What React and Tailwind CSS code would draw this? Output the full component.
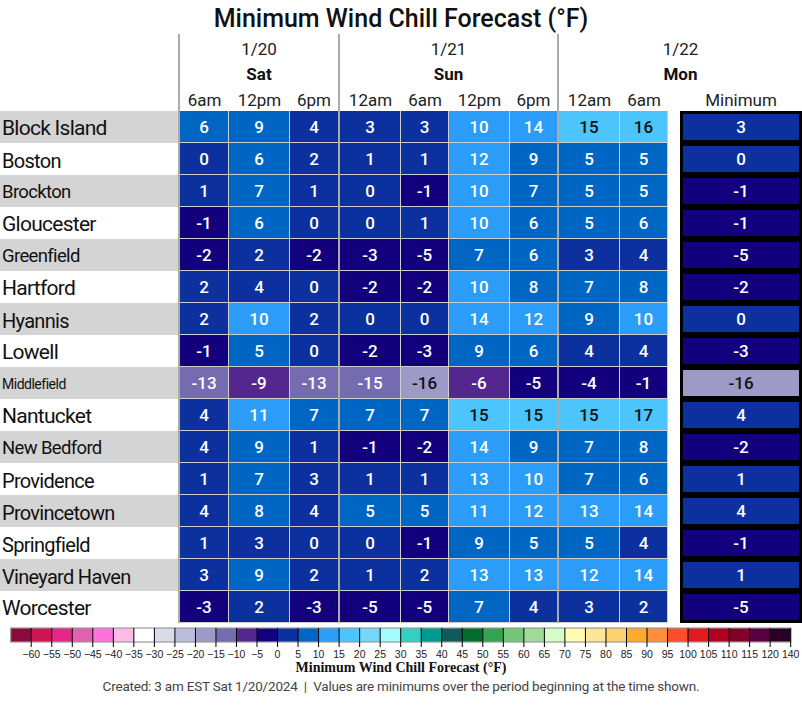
import React from 'react';

// Legend bins: <-60, then 5° steps from -60 up to 120, then 120–140
const BINS = [
  'bg-[#8b0a3e]', 'bg-[#cf1454]', 'bg-[#e4288a]', 'bg-[#de62ac]', 'bg-[#fe72dc]', 'bg-[#ffbbe6]',
  'bg-[#ffffff]', 'bg-[#dadaeb]', 'bg-[#bcbddc]', 'bg-[#9e9ac8]', 'bg-[#756bb1]', 'bg-[#54278f]',
  'bg-[#12007c]', 'bg-[#0c309e]', 'bg-[#0066c4]', 'bg-[#2b9cf8]', 'bg-[#4cc4fc]', 'bg-[#74d8fc]',
  'bg-[#a6fcfc]', 'bg-[#33cfc4]', 'bg-[#019a92]', 'bg-[#105a58]', 'bg-[#016c2c]', 'bg-[#32a452]',
  'bg-[#74c476]', 'bg-[#a1d99b]', 'bg-[#d2fdc4]', 'bg-[#fefcb0]', 'bg-[#fee698]', 'bg-[#fed070]',
  'bg-[#feaa2c]', 'bg-[#fd8c3c]', 'bg-[#fc4e2a]', 'bg-[#e31a1c]', 'bg-[#b10026]', 'bg-[#800026]',
  'bg-[#5a0040]', 'bg-[#2a0028]',
];
const DARK_TEXT = new Set([5, 6, 7, 8, 9, 16, 17, 18, 25, 26, 27, 28, 29, 30]);

function binOf(v) {
  if (v < -60) return 0;
  if (v >= 120) return 37;
  return Math.floor((v + 60) / 5) + 1;
}

const CITIES = [
  { name: 'Block Island', size: 'text-[21px]', v: [6, 9, 4, 3, 3, 10, 14, 15, 16], min: 3 },
  { name: 'Boston', size: 'text-[20px]', v: [0, 6, 2, 1, 1, 12, 9, 5, 5], min: 0 },
  { name: 'Brockton', size: 'text-[18.5px]', v: [1, 7, 1, 0, -1, 10, 7, 5, 5], min: -1 },
  { name: 'Gloucester', size: 'text-[21px]', v: [-1, 6, 0, 0, 1, 10, 6, 5, 6], min: -1 },
  { name: 'Greenfield', size: 'text-[18.5px]', v: [-2, 2, -2, -3, -5, 7, 6, 3, 4], min: -5 },
  { name: 'Hartford', size: 'text-[21px]', v: [2, 4, 0, -2, -2, 10, 8, 7, 8], min: -2 },
  { name: 'Hyannis', size: 'text-[20px]', v: [2, 10, 2, 0, 0, 14, 12, 9, 10], min: 0 },
  { name: 'Lowell', size: 'text-[21px]', v: [-1, 5, 0, -2, -3, 9, 6, 4, 4], min: -3 },
  { name: 'Middlefield', size: 'text-[14px]', v: [-13, -9, -13, -15, -16, -6, -5, -4, -1], min: -16 },
  { name: 'Nantucket', size: 'text-[21px]', v: [4, 11, 7, 7, 7, 15, 15, 15, 17], min: 4 },
  { name: 'New Bedford', size: 'text-[18.5px]', v: [4, 9, 1, -1, -2, 14, 9, 7, 8], min: -2 },
  { name: 'Providence', size: 'text-[20px]', v: [1, 7, 3, 1, 1, 13, 10, 7, 6], min: 1 },
  { name: 'Provincetown', size: 'text-[20px]', v: [4, 8, 4, 5, 5, 11, 12, 13, 14], min: 4 },
  { name: 'Springfield', size: 'text-[20px]', v: [1, 3, 0, 0, -1, 9, 5, 5, 4], min: -1 },
  { name: 'Vineyard Haven', size: 'text-[20px]', v: [3, 9, 2, 1, 2, 13, 13, 12, 14], min: 1 },
  { name: 'Worcester', size: 'text-[21px]', v: [-3, 2, -3, -5, -5, 7, 4, 3, 2], min: -5 },
];

// start = index into each city's values; w includes the cell's right border
const GROUPS = [
  {
    date: '1/20', day: 'Sat', width: 'w-[160px]',
    cols: [
      { t: '6am', w: 'w-[49px]', border: true },
      { t: '12pm', w: 'w-[61px]', border: true },
      { t: '6pm', w: 'w-[48px]', border: false },
    ],
    start: 0,
  },
  {
    date: '1/21', day: 'Sun', width: 'w-[219px]',
    cols: [
      { t: '12am', w: 'w-[61px]', border: true },
      { t: '6am', w: 'w-[48px]', border: true },
      { t: '12pm', w: 'w-[61px]', border: true },
      { t: '6pm', w: 'w-[47px]', border: false },
    ],
    start: 3,
  },
  {
    date: '1/22', day: 'Mon', width: 'w-[245px]',
    cols: [
      { t: '12am', w: 'w-[61px]', border: true },
      { t: '6am', w: 'w-[48px]', border: true },
    ],
    start: 7,
    minimum: true,
  },
];

function Cell({ value, w, border }) {
  const b = binOf(value);
  return (
    <div
      className={`${w} h-[32px] shrink-0 flex items-center justify-center pt-[2px] border-b border-[#cfcfcf] text-[17px] font-medium
        ${BINS[b]} ${DARK_TEXT.has(b) ? 'text-[#111]' : 'text-white'} ${border ? 'border-r' : ''}`}
    >
      {value}
    </div>
  );
}

function MinCell({ value }) {
  const b = binOf(value);
  return (
    <div
      className={`w-[122px] h-[32px] shrink-0 flex items-center justify-center pt-[1px] border-[3px] border-black text-[17px] font-medium
        ${BINS[b]} ${DARK_TEXT.has(b) ? 'text-[#111]' : 'text-white'}`}
    >
      {value}
    </div>
  );
}

function ColorBar() {
  const x0 = 10.7;
  const bw = 20.526;
  const labels = [];
  for (let i = 1; i <= 38; i++) {
    const val = i === 38 ? 140 : -65 + i * 5;
    labels.push({ x: x0 + i * bw, text: val < 0 ? `\u2212${-val}` : `${val}` });
  }
  return (
    <svg width="802" height="38" className="block">
      {BINS.map((cls, i) => (
        <rect key={i} x={x0 + i * bw} y="5" width={bw} height="14" fill={cls.slice(4, -1)} />
      ))}
      <rect x={x0} y="5" width={bw * 38} height="14" fill="none" stroke="#9a9a9a" strokeWidth="1.2" />
      {labels.map((l, i) => (
        <g key={i}>
          <line x1={l.x} x2={l.x} y1="5" y2="24" stroke="#000" strokeWidth="1" />
          <text
            x={l.x}
            y="35"
            textAnchor="middle"
            fontSize="10.5"
            fill="#222"
            fontFamily="'Liberation Sans', Arial, sans-serif"
          >
            {l.text}
          </text>
        </g>
      ))}
    </svg>
  );
}

export default function App() {
  return (
    <div className="w-[802px] h-[715px] overflow-hidden bg-white text-[#111] font-['Roboto',sans-serif]">
      {/* ── Title ─────────────────────────────────────────────── */}
      <div className="h-[34px] flex items-center justify-center pt-[3px] text-[25px] font-medium leading-none">
        Minimum Wind Chill Forecast (°F)
      </div>

      {/* ── Table ─────────────────────────────────────────────── */}
      <div className="flex">
        {/* city names */}
        <div className="w-[178px] shrink-0">
          <div className="h-[77px]" />
          {CITIES.map((c, i) => (
            <div
              key={c.name}
              className={`h-[32px] flex items-center pl-[2px] pt-[3px] tracking-[-0.035em] whitespace-nowrap ${c.size}
                ${i % 2 === 0 ? 'bg-[#d4d4d4]' : 'bg-white'}`}
            >
              {c.name}
            </div>
          ))}
        </div>

        {GROUPS.map(g => (
          <div key={g.day} className={`${g.width} shrink-0 border-l-2 border-[#ababab]`}>
            <div className="h-[26px] flex items-end justify-center text-[17px] text-[#222] leading-none pb-[2px]">
              {g.date}
            </div>
            <div className="h-[26px] flex items-center justify-center pt-[2px] text-[17px] font-bold leading-none">
              {g.day}
            </div>
            <div className="h-[25px] flex text-[17px] text-[#222] leading-none pt-[4px]">
              {g.cols.map(c => (
                <div key={c.t} className={`${c.w} shrink-0 flex items-center justify-center`}>{c.t}</div>
              ))}
              {g.minimum && (
                <>
                  <div className="w-[12px] shrink-0" />
                  <div className="w-[122px] shrink-0 flex items-center justify-center">Minimum</div>
                </>
              )}
            </div>
            {CITIES.map(city => (
              <div key={city.name} className="flex">
                {g.cols.map((c, ci) => (
                  <Cell key={c.t} value={city.v[g.start + ci]} w={c.w} border={c.border} />
                ))}
                {g.minimum && (
                  <>
                    <div className="w-[12px] shrink-0" />
                    <MinCell value={city.min} />
                  </>
                )}
              </div>
            ))}
          </div>
        ))}
      </div>

      {/* ── Legend ────────────────────────────────────────────── */}
      <ColorBar />
      <div className="text-center font-['Liberation_Serif',serif] font-bold text-[14px] leading-[14px] text-[#111]">
        Minimum Wind Chill Forecast (°F)
      </div>
      <div className="text-center text-[13.5px] tracking-[-0.015em] leading-[20px] text-[#444] mt-[1px] whitespace-pre">
        Created: 3 am EST Sat 1/20/2024  |  Values are minimums over the period beginning at the time shown.
      </div>
    </div>
  );
}
